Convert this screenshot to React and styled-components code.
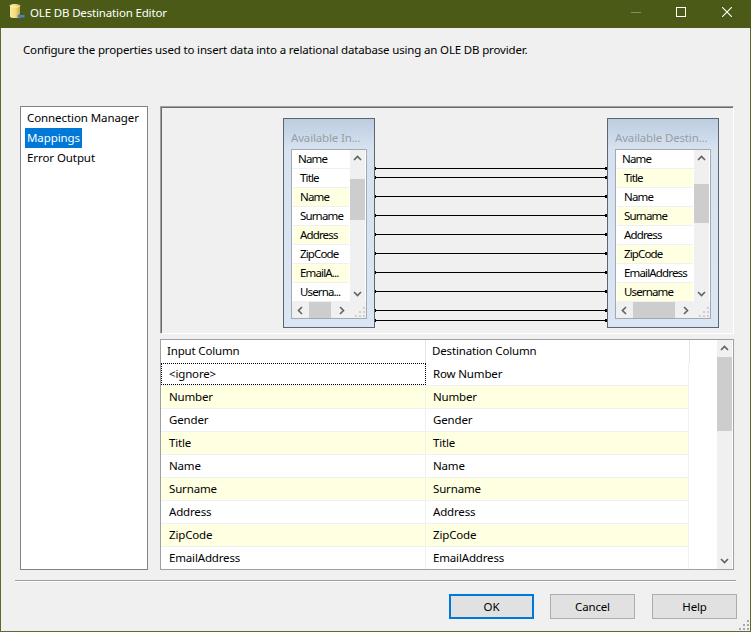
import React from 'react'
import styled, { createGlobalStyle } from 'styled-components'

const GlobalStyle = createGlobalStyle`
	html, body {
		margin: 0;
		padding: 0;
		background: #f0f0f0;
	}
	* {
		box-sizing: border-box;
	}
`

const Window = styled.div`
	width: 751px;
	height: 632px;
	display: flex;
	flex-direction: column;
	background: #f0f0f0;
	border: 1px solid #5a6b2e;
	border-top: none;
	font-family: 'Noto Sans', 'Open Sans', sans-serif;
	font-size: 11.5px;
	letter-spacing: -0.16px;
	color: #000;
`

const TitleBar = styled.header`
	height: 28px;
	margin: 0 -1px;
	padding: 0 0 3px 9px;
	display: flex;
	align-items: center;
	flex-shrink: 0;
	background: #4b5b17;
	color: #fff;
`

const TitleIcon = styled.svg`
	margin-bottom: 3px;
	flex-shrink: 0;
`

const TitleText = styled.span`
	margin-left: 5px;
`

const WindowControls = styled.div`
	margin-left: auto;
	margin-right: 1px;
	align-self: flex-start;
	display: flex;
`

const WindowControl = styled.div`
	width: 46px;
	padding-top: 7px;
	display: flex;
	align-items: flex-start;
	justify-content: center;
`

const Description = styled.p`
	height: 78px;
	margin: 0;
	padding: 13px 0 0 22px;
	line-height: 18px;
	flex-shrink: 0;
`

const Main = styled.div`
	height: 464px;
	padding: 0 16px 0 19px;
	display: flex;
	gap: 12px;
	flex-shrink: 0;
`

const Nav = styled.nav`
	width: 128px;
	padding: 1px 4px;
	flex-shrink: 0;
	background: #fff;
	border: 1px solid #82828c;
`

const NavItem = styled.div`
	width: ${p => (p.$active ? '57px' : 'auto')};
	height: 20px;
	padding-left: 2px;
	line-height: 20px;
	white-space: nowrap;
	letter-spacing: -0.08px;
	background: ${p => (p.$active ? '#0078d7' : 'transparent')};
	color: ${p => (p.$active ? '#fff' : '#000')};
`

const Content = styled.div`
	width: 574px;
	display: flex;
	flex-direction: column;
	gap: 5px;
`

const Canvas = styled.div`
	position: relative;
	height: 228px;
	flex-shrink: 0;
	background: #f0f0f0;
	border-top: 1px solid #a0a0a0;
	border-left: 1px solid #a0a0a0;
	border-right: 1px solid #fff;
	border-bottom: 1px solid #fff;
	box-shadow: inset 1px 1px 0 #696969;
`

const Links = styled.svg`
	position: absolute;
	left: 214px;
	top: 1px;
`

const TableBox = styled.div`
	position: absolute;
	left: ${p => p.$left}px;
	top: 11px;
	width: ${p => p.$width}px;
	height: 210px;
	padding: 0 7px 8px;
	display: flex;
	flex-direction: column;
	background: linear-gradient(#bccde0 0, #d6e2f0 30px, #dae6f3 100%);
	border: 1px solid #5c6670;
`

const BoxTitle = styled.div`
	height: 30px;
	padding-top: 10px;
	line-height: 18px;
	white-space: nowrap;
	overflow: hidden;
	color: #9a9da3;
`

const BoxList = styled.div`
	flex: 1;
	display: grid;
	grid-template-columns: 1fr 16px;
	grid-template-rows: 1fr 16px;
	background: #fff;
	border: 1px solid #a3a9b1;
`

const BoxRows = styled.div`
	overflow: hidden;
`

const BoxRow = styled.div`
	height: 19px;
	padding-left: ${p => (p.$head ? '6px' : '7px')};
	margin: ${p => (p.$head ? '0' : '0 1px')};
	line-height: 17px;
	white-space: nowrap;
	letter-spacing: -0.85px;
	background: ${p => (p.$alt ? '#ffffe1' : '#fff')};
	border-bottom: 1px solid #f0f0f0;
`

const VScroll = styled.div`
	display: flex;
	flex-direction: column;
	align-items: stretch;
	background: #f0f0f0;
`

const BoxScroll = styled(VScroll)`
	margin-right: 1px;
`

const ArrowCell = styled.div`
	height: 16px;
	display: flex;
	align-items: center;
	justify-content: center;
	flex-shrink: 0;
`

const BottomArrow = styled(ArrowCell)`
	margin-top: auto;
`

const VThumb = styled.div`
	height: ${p => p.$size}px;
	margin-top: ${p => p.$offset}px;
	background: #cdcdcd;
	flex-shrink: 0;
`

const HScroll = styled.div`
	display: flex;
	align-items: stretch;
	background: #f0f0f0;
`

const HArrow = styled.div`
	width: 16px;
	display: flex;
	align-items: center;
	justify-content: center;
	flex-shrink: 0;
`

const HThumb = styled.div`
	width: ${p => p.$size}px;
	margin-left: 1px;
	background: #cdcdcd;
	flex-shrink: 0;
`

const HArrowEnd = styled(HArrow)`
	margin-left: auto;
`

const Corner = styled.div`
	display: flex;
	align-items: flex-end;
	justify-content: flex-end;
	background: #f0f0f0;
`

const Grid = styled.div`
	flex: 1;
	display: flex;
	background: #fff;
	border: 1px solid #a0a0a0;
	overflow: hidden;
`

const GridBody = styled.div`
	width: 529px;
	flex-shrink: 0;
`

const HeaderRow = styled.div`
	height: 23px;
	display: flex;
`

const HeaderCell = styled.div`
	width: ${p => p.$width}px;
	padding-left: 6px;
	line-height: 21px;
	border-right: 1px solid #e5e5e5;
`

const Row = styled.div`
	height: 23px;
	width: 528px;
	display: flex;
	background: ${p => (p.$alt ? '#ffffe1' : '#fff')};
	border-bottom: 1px solid #f0f0f0;
`

const Cell = styled.div`
	width: ${p => p.$width}px;
	padding-left: ${p => p.$pad}px;
	line-height: 22px;
	border-right: 1px solid #f0f0f0;
	outline: ${p => (p.$focus ? '1px dotted #000' : 'none')};
	outline-offset: -1px;
`

const GridFill = styled.div`
	width: 27px;
	flex-shrink: 0;
`

const GridScroll = styled(VScroll)`
	width: 15px;
	flex-shrink: 0;
`

const Separator = styled.div`
	height: 2px;
	margin: 10px 14px 0;
	flex-shrink: 0;
	background: #a0a0a0;
	border-bottom: 1px solid #fff;
`

const Footer = styled.footer`
	position: relative;
	flex: 1;
	padding: 12px 13px 0 0;
	display: flex;
	justify-content: flex-end;
	gap: 16px;
`

const Button = styled.button`
	width: 85px;
	height: 25px;
	margin-left: ${p => p.$nudge || 0}px;
	padding: 0 0 1px;
	font: inherit;
	letter-spacing: inherit;
	color: #000;
	background: #e1e1e1;
	border: ${p => (p.$primary ? '2px solid #0078d7' : '1px solid #adadad')};
`

const Grip = styled.div`
	position: absolute;
	right: 0;
	bottom: 0;
	display: flex;
`

const ChevronUp = () => (
	<svg width='9' height='6' viewBox='0 0 9 6'>
		<path d='M1 5 L4.5 1.5 L8 5' fill='none' stroke='#606060' strokeWidth='1.6' />
	</svg>
)

const ChevronDown = () => (
	<svg width='9' height='6' viewBox='0 0 9 6'>
		<path d='M1 1 L4.5 4.5 L8 1' fill='none' stroke='#606060' strokeWidth='1.6' />
	</svg>
)

const ChevronLeft = () => (
	<svg width='6' height='9' viewBox='0 0 6 9'>
		<path d='M5 1 L1.5 4.5 L5 8' fill='none' stroke='#606060' strokeWidth='1.6' />
	</svg>
)

const ChevronRight = () => (
	<svg width='6' height='9' viewBox='0 0 6 9'>
		<path d='M1 1 L4.5 4.5 L1 8' fill='none' stroke='#606060' strokeWidth='1.6' />
	</svg>
)

const gripDots = [[9, 1], [9, 5], [5, 5], [9, 9], [5, 9], [1, 9]]

const GripDots = ({ color = '#d0d0d0' }) => (
	<svg width='12' height='12' viewBox='0 0 12 12'>
		{gripDots.map(([x, y]) => (
			<rect key={x + '-' + y} x={x} y={y} width='2' height='2' fill={color} />
		))}
	</svg>
)

const DbIcon = () => (
	<TitleIcon width='16' height='16' viewBox='0 0 16 16'>
		<defs>
			<linearGradient id='db' x1='0' x2='1' y1='0' y2='0'>
				<stop offset='0' stopColor='#f8ec9e' />
				<stop offset='0.55' stopColor='#f2dc78' />
				<stop offset='1' stopColor='#c9a948' />
			</linearGradient>
		</defs>
		<path d='M1 2.5 C1 0.5 11 0.5 11 2.5 V13.5 C11 15.5 1 15.5 1 13.5 Z' fill='url(#db)' />
		<path d='M1 2.5 C1 4.5 11 4.5 11 2.5' fill='none' stroke='#fff6c4' />
		<path d='M8 13 L11 10.5 V12 H15.5 V14.5 H11 V16 Z' fill='#4f81c7' />
	</TitleIcon>
)

const inputRows = ['Title', 'Name', 'Surname', 'Address', 'ZipCode', 'EmailA...', 'Userna...']
const destRows = ['Title', 'Name', 'Surname', 'Address', 'ZipCode', 'EmailAddress', 'Username']
const linkRows = [60, 69, 88, 107, 126, 145, 164, 183, 202, 212]

const gridRows = [
	['<ignore>', 'Row Number'],
	['Number', 'Number'],
	['Gender', 'Gender'],
	['Title', 'Title'],
	['Name', 'Name'],
	['Surname', 'Surname'],
	['Address', 'Address'],
	['ZipCode', 'ZipCode'],
	['EmailAddress', 'EmailAddress'],
]

const ColumnBox = ({ title, rows, left, width, altStart, thumb, hThumb }) => (
	<TableBox $left={left} $width={width}>
		<BoxTitle>{title}</BoxTitle>
		<BoxList>
			<BoxRows>
				<BoxRow $head>Name</BoxRow>
				{rows.map((row, i) => (
					<BoxRow key={row} $alt={i % 2 === altStart}>
						{row}
					</BoxRow>
				))}
			</BoxRows>
			<BoxScroll>
				<ArrowCell>
					<ChevronUp />
				</ArrowCell>
				<VThumb $size={thumb.size} $offset={thumb.offset} />
				<BottomArrow>
					<ChevronDown />
				</BottomArrow>
			</BoxScroll>
			<HScroll>
				<HArrow>
					<ChevronLeft />
				</HArrow>
				<HThumb $size={hThumb} />
				<HArrowEnd>
					<ChevronRight />
				</HArrowEnd>
			</HScroll>
			<Corner>
				<GripDots />
			</Corner>
		</BoxList>
	</TableBox>
)

const App = () => {
	return (
		<>
			<GlobalStyle />
			<Window>
				<TitleBar>
					<DbIcon />
					<TitleText>OLE DB Destination Editor</TitleText>
					<WindowControls>
						<WindowControl>
							<svg width='12' height='10' viewBox='0 0 12 10'>
								<rect x='2' y='5' width='10' height='1' fill='#84905e' />
							</svg>
						</WindowControl>
						<WindowControl>
							<svg width='10' height='10' viewBox='0 0 10 10'>
								<rect x='0.5' y='0.5' width='9' height='9' fill='none' stroke='#fff' />
							</svg>
						</WindowControl>
						<WindowControl>
							<svg width='10' height='10' viewBox='0 0 10 10'>
								<path d='M0 0 L10 10 M10 0 L0 10' stroke='#fff' strokeWidth='1.1' />
							</svg>
						</WindowControl>
					</WindowControls>
				</TitleBar>
				<Description>
					Configure the properties used to insert data into a relational database using an OLE DB provider.
				</Description>
				<Main>
					<Nav>
						<NavItem>Connection Manager</NavItem>
						<NavItem $active>Mappings</NavItem>
						<NavItem>Error Output</NavItem>
					</Nav>
					<Content>
						<Canvas>
							<Links width='234' height='225'>
								{linkRows.map(y => (
									<g key={y}>
										<rect x='0' y={y} width='234' height='1' fill='#000' />
										<rect x='0' y={y - 1} width='1' height='3' fill='#000' />
										<path d={`M230 ${y - 1} L232 ${y - 1} L234 ${y} L234 ${y + 1} L232 ${y + 2} L230 ${y + 2} Z`} fill='#000' />
									</g>
								))}
							</Links>
							<ColumnBox
								title='Available In...'
								rows={inputRows}
								left={122}
								width={92}
								altStart={1}
								thumb={{ size: 41, offset: 13 }}
								hThumb={22}
							/>
							<ColumnBox
								title='Available Destin...'
								rows={destRows}
								left={446}
								width={112}
								altStart={0}
								thumb={{ size: 39, offset: 18 }}
								hThumb={42}
							/>
						</Canvas>
						<Grid>
							<GridBody>
								<HeaderRow>
									<HeaderCell $width={265}>Input Column</HeaderCell>
									<HeaderCell $width={264}>Destination Column</HeaderCell>
								</HeaderRow>
								{gridRows.map((row, i) => (
									<Row key={row[0]} $alt={i % 2 === 1}>
										<Cell $width={265} $pad={8} $focus={i === 0}>
											{row[0]}
										</Cell>
										<Cell $width={263} $pad={7}>
											{row[1]}
										</Cell>
									</Row>
								))}
							</GridBody>
							<GridFill />
							<GridScroll>
								<ArrowCell>
									<ChevronUp />
								</ArrowCell>
								<VThumb $size={74} $offset={1} />
								<BottomArrow>
									<ChevronDown />
								</BottomArrow>
							</GridScroll>
						</Grid>
					</Content>
				</Main>
				<Separator />
				<Footer>
					<Button $primary>OK</Button>
					<Button>Cancel</Button>
					<Button $nudge={1}>Help</Button>
					<Grip>
						<GripDots color='#a8a8a8' />
					</Grip>
				</Footer>
			</Window>
		</>
	)
}

export default App
